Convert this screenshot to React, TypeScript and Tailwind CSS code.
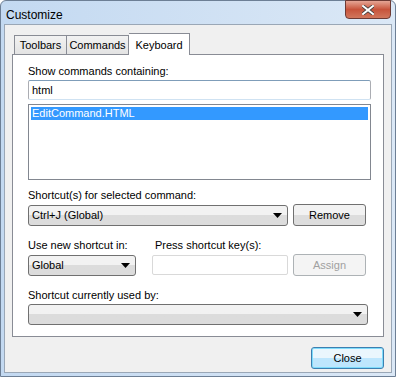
import React from 'react'

const font = { fontFamily: '"Liberation Sans", Arial, sans-serif' }

function Arrow() {
  return (
    <svg width="9" height="5" viewBox="0 0 9 5" className="shrink-0">
      <path d="M0 0h9L4.5 5z" fill="#000" />
    </svg>
  )
}

function Combo({ value, className }: { value: string; className: string }) {
  return (
    <div
      className={`flex items-center justify-between h-[21px] pl-[3px] pr-[5px] border border-[#707070] rounded-[3px] bg-gradient-to-b from-[#f2f2f2] from-50% to-[#dcdcdc] to-50% ${className}`}
    >
      <span className="text-[11px] leading-none text-black">{value}</span>
      <Arrow />
    </div>
  )
}

function Button({ label, disabled, primary }: { label: string; disabled?: boolean; primary?: boolean }) {
  let cls = 'border-[#707070] bg-gradient-to-b from-[#f2f2f2] from-50% to-[#dddddd] to-50% text-black'
  if (disabled) cls = 'border-[#adb2b5] bg-[#f4f4f4] text-[#a0a0a0]'
  if (primary)
    cls = 'border-[#3c7fb1] bg-gradient-to-b from-[#eaf6fd] from-50% to-[#bee6fd] to-50% text-black shadow-[inset_0_0_0_1px_#7fdcfb]'
  return (
    <div className={`flex items-center justify-center w-[73px] h-[22px] border rounded-[3px] text-[11px] ${cls}`}>
      {label}
    </div>
  )
}

export default function App() {
  return (
    <div className="w-[396px] h-[379px] bg-white" style={font}>
      <div className="flex flex-col w-[396px] h-[377px] rounded-t-[6px] border border-[#6d7f95] bg-gradient-to-r from-[#c3d9f1] to-[#dbe8f6]">
        {/* title bar */}
        <div className="flex justify-between h-[23px] pl-[5px] pr-[4px]">
          <span className="pt-[5px] text-[12px] text-black">Customize</span>
          <div className="flex items-center justify-center w-[46px] h-[19px] -mt-px border border-[#6d3a34] rounded-b-[4px] bg-gradient-to-b from-[#e5a595] via-[#c7533b] to-[#d1765c]">
            <svg width="12" height="10" viewBox="0 0 12 10">
              <path d="M1 1l10 8M11 1L1 9" stroke="#3c3c3c" strokeWidth="3.6" strokeLinecap="square" />
              <path d="M1 1l10 8M11 1L1 9" stroke="#fff" strokeWidth="2" strokeLinecap="square" />
            </svg>
          </div>
        </div>

        {/* client area */}
        <div className="flex flex-col flex-1 mx-[3px] mb-[3px] border border-[#9aa7b6] bg-[#f0f0f0] px-[7px] pt-[8px]">
          {/* tabs */}
          <div className="flex items-end h-[21px] pl-[2px] relative z-10">
            <div className="flex items-center justify-center w-[53px] h-[19px] border border-b-0 border-[#898c95] bg-gradient-to-b from-[#f2f2f2] to-[#e3e3e3] text-[11px]">
              Toolbars
            </div>
            <div className="flex items-center justify-center w-[62px] h-[19px] border border-l-0 border-b-0 border-[#898c95] bg-gradient-to-b from-[#f2f2f2] to-[#e3e3e3] text-[11px]">
              Commands
            </div>
            <div className="flex items-start justify-center w-[61px] h-[22px] -mb-px border border-l-0 border-b-0 border-[#898c95] bg-white pt-[3px] text-[11px]">
              Keyboard
            </div>
          </div>

          {/* panel */}
          <div className="flex flex-col h-[283px] border border-[#898c95] bg-white pl-[15px] pr-[12px] pt-[9px] text-[11px] text-black">
            <div className="h-[15px] leading-[15px]">Show commands containing:</div>
            <div className="flex items-center h-[20px] mt-px pl-[3px] border border-[#abadb3] border-t-[#7f9db9] border-b-[#cfe2f2] rounded-[2px]">
              html
            </div>
            <div className="h-[76px] mt-[4px] p-[2px] border border-[#828790]">
              <div className="h-[13px] leading-[13px] pl-px bg-[#3399ff] text-white">EditCommand.HTML</div>
            </div>

            <div className="h-[15px] leading-[15px] mt-[8px]">Shortcut(s) for selected command:</div>
            <div className="flex items-center gap-[5px] mt-px">
              <Combo value="Ctrl+J (Global)" className="w-[260px]" />
              <Button label="Remove" />
            </div>

            <div className="flex h-[15px] leading-[15px] mt-[12px]">
              <span className="w-[127px]">Use new shortcut in:</span>
              <span>Press shortcut key(s):</span>
            </div>
            <div className="flex items-center mt-px">
              <Combo value="Global" className="w-[108px]" />
              <div className="w-[136px] h-[20px] ml-[16px] border border-[#d9d9d9] rounded-[2px]" />
              <div className="ml-[5px]">
                <Button label="Assign" disabled />
              </div>
            </div>

            <div className="h-[15px] leading-[15px] mt-[12px]">Shortcut currently used by:</div>
            <div className="mt-px">
              <Combo value="" className="w-[340px]" />
            </div>
          </div>

          {/* footer */}
          <div className="flex justify-end pt-[10px]">
            <Button label="Close" primary />
          </div>
        </div>
      </div>
    </div>
  )
}
